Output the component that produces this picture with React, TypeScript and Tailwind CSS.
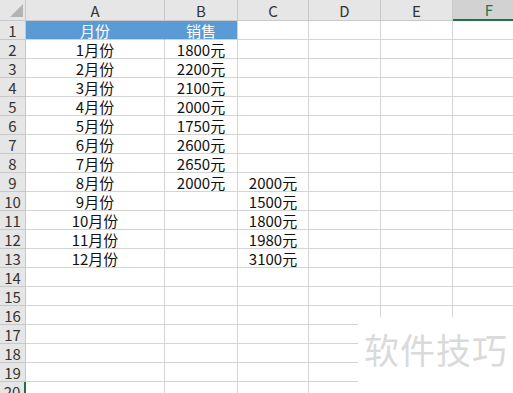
import React from "react";

const cols = [
  { key: "A", w: "w-[139px]" },
  { key: "B", w: "w-[73px]" },
  { key: "C", w: "w-[71px]" },
  { key: "D", w: "w-[72px]" },
  { key: "E", w: "w-[72px]" },
  { key: "F", w: "w-[72px]" },
];

const A: Record<number, string> = {
  2: "1月份", 3: "2月份", 4: "3月份", 5: "4月份", 6: "5月份", 7: "6月份",
  8: "7月份", 9: "8月份", 10: "9月份", 11: "10月份", 12: "11月份", 13: "12月份",
};
const B: Record<number, string> = {
  2: "1800元", 3: "2200元", 4: "2100元", 5: "2000元", 6: "1750元", 7: "2600元", 8: "2650元", 9: "2000元",
};
const C: Record<number, string> = {
  9: "2000元", 10: "1500元", 11: "1800元", 12: "1980元", 13: "3100元",
};

const font = { fontFamily: '"Noto Sans CJK SC", "Microsoft YaHei", sans-serif' };

export default function App() {
  const rows = Array.from({ length: 20 }, (_, i) => i + 1);
  return (
    <div className="relative w-[513px] h-[393px] overflow-hidden bg-white text-[15px] leading-none" style={font}>
      {/* column header */}
      <div className="flex h-[21px] bg-[#e6e6e6] border-b border-[#c8c8c8]">
        <div className="w-[26px] shrink-0 border-r border-[#c8c8c8] flex items-end justify-end pr-[2px] pb-[3px]">
          <svg width="13" height="13" viewBox="0 0 13 13">
            <polygon points="13,0 13,13 0,13" fill="#b4b4b4" />
          </svg>
        </div>
        {cols.map((c) =>
          c.key === "F" ? (
            <div key={c.key} className={`${c.w} shrink-0 bg-[#d2d2d2] border-b-2 border-[#217346] -mb-[1px] flex items-center justify-center text-[#217346]`}>
              {c.key}
            </div>
          ) : (
            <div key={c.key} className={`${c.w} shrink-0 border-r border-[#c8c8c8] flex items-center justify-center text-[#333]`}>
              {c.key}
            </div>
          )
        )}
      </div>
      {rows.map((r) => (
        <div key={r} className="flex h-[19px]">
          <div
            className={`w-[26px] shrink-0 bg-[#e6e6e6] border-b border-[#c8c8c8] flex items-center justify-center text-[#333] ${
              r === 20 ? "border-r-2 border-r-[#217346]" : "border-r border-r-[#c8c8c8]"
            }`}
          >
            {r}
          </div>
          {cols.map((c) => {
            let text = "";
            if (c.key === "A") text = r === 1 ? "月份" : A[r] || "";
            if (c.key === "B") text = r === 1 ? "销售" : B[r] || "";
            if (c.key === "C") text = C[r] || "";
            const header = r === 1 && (c.key === "A" || c.key === "B");
            return (
              <div
                key={c.key}
                className={`${c.w} shrink-0 flex items-center justify-center border-b border-r ${
                  header
                    ? "bg-[#5b9bd5] text-white border-b-[#d4d4d4] " + (c.key === "A" ? "border-r-[#5b9bd5]" : "border-r-[#d4d4d4]")
                    : "border-[#d4d4d4] text-[#111]"
                }`}
              >
                {text}
              </div>
            );
          })}
        </div>
      ))}
      {/* watermark */}
      <div className="absolute left-[358px] top-[317px] right-0 bottom-0 bg-white">
        <div className="absolute left-[6px] top-[14px] text-[35px] leading-none tracking-[1px] text-[#dadada] whitespace-nowrap">
          软件技巧
        </div>
      </div>
    </div>
  );
}
